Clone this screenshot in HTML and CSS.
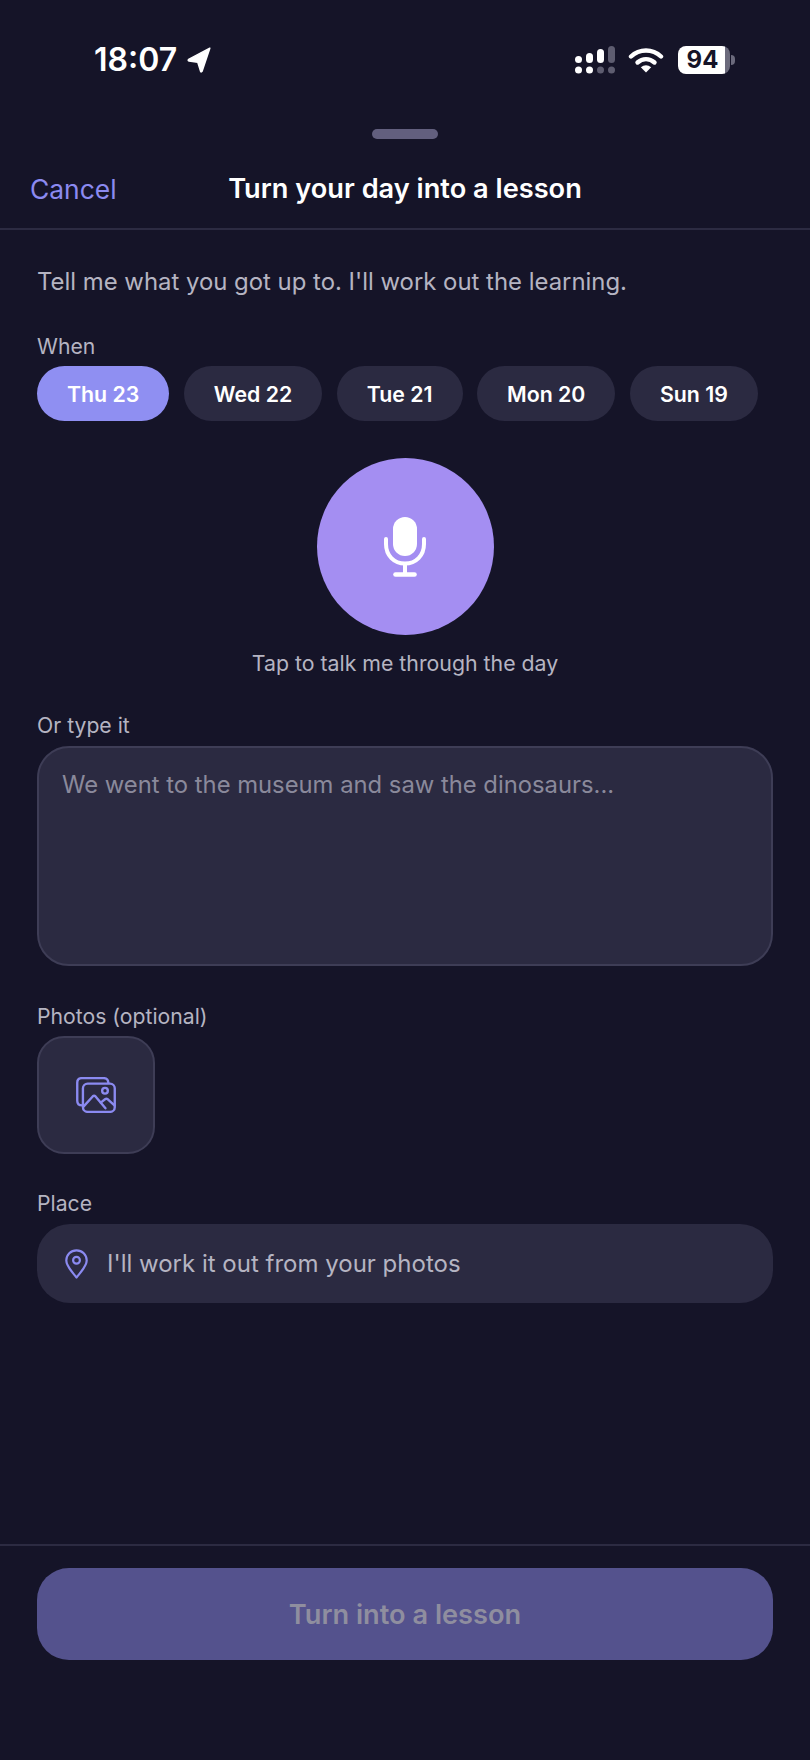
FILE: index.html
```html
<!DOCTYPE html>
<html lang="en">
<head>
    <meta charset="UTF-8">
    <meta name="viewport" content="width=device-width, initial-scale=1.0">
    <title>Turn your day into a lesson</title>
    <link rel="stylesheet" href="styles.css">
</head>
<body>
    <!-- Status bar -->
    <div class="status-bar">
        <div class="status-left">
            <span class="status-time">18:07</span>
            <svg class="status-arrow" width="24" height="26" viewBox="0 0 24 26">
                <path d="M22.8 1.2 L1.6 12.4 Q0.6 13.6 2 14 L10.8 15.2 L13.6 24.4 Q14.2 25.4 15 24.4 Z" fill="#fff" stroke="#fff" stroke-width="1.5" stroke-linejoin="round"/>
            </svg>
        </div>
        <div class="status-right">
            <svg class="status-signal" width="40" height="28" viewBox="0 0 40 28">
                <rect x="0" y="10" width="7" height="7" rx="3.5" fill="#fff"/>
                <rect x="11" y="7" width="7" height="10" rx="3.5" fill="#fff"/>
                <rect x="22" y="3" width="7" height="14" rx="3.5" fill="#fff"/>
                <rect x="33" y="0" width="7" height="17" rx="3.5" fill="#5e5d70"/>
                <circle cx="3.5" cy="24" r="3.5" fill="#fff"/>
                <circle cx="14.5" cy="24" r="3.5" fill="#fff"/>
                <circle cx="25.5" cy="24" r="3.5" fill="#5e5d70"/>
                <circle cx="36.5" cy="24" r="3.5" fill="#5e5d70"/>
            </svg>
            <svg class="status-wifi" width="36" height="26" viewBox="0 0 36 26">
                <path d="M3 9.5 C11.5 1.5 24.5 1.5 33 9.5" fill="none" stroke="#fff" stroke-width="4.4" stroke-linecap="round"/>
                <path d="M9.5 15.5 C14.5 11 21.5 11 26.5 15.5" fill="none" stroke="#fff" stroke-width="4.4" stroke-linecap="round"/>
                <path d="M12.8 20.2 Q18 16.2 23.2 20.2 L18 25.6 Z" fill="#fff"/>
            </svg>
            <div class="battery">
                <div class="battery-body"><span class="battery-level">94</span></div>
                <div class="battery-nub"></div>
            </div>
        </div>
    </div>

    <div class="sheet-handle"></div>

    <!-- Header -->
    <div class="sheet-header">
        <span class="cancel-link">Cancel</span>
        <h1 class="sheet-title">Turn your day into a lesson</h1>
    </div>

    <div class="content">
        <p class="intro">Tell me what you got up to. I'll work out the learning.</p>

        <div class="field-label when-label">When</div>
        <div class="chip-row">
            <span class="chip chip-active">Thu 23</span>
            <span class="chip">Wed 22</span>
            <span class="chip">Tue 21</span>
            <span class="chip">Mon 20</span>
            <span class="chip">Sun 19</span>
        </div>

        <!-- Voice input -->
        <div class="mic-block">
            <div class="mic-button">
                <svg width="42" height="60" viewBox="0 0 42 60">
                    <rect x="9" y="0" width="24" height="39" rx="12" fill="#fff"/>
                    <path d="M2 22 V27 C2 38.5 10 46.5 21 46.5 C32 46.5 40 38.5 40 27 V22" fill="none" stroke="#fff" stroke-width="4" stroke-linecap="round"/>
                    <path d="M21 47 V56" stroke="#fff" stroke-width="4"/>
                    <path d="M11.5 57.5 H30.5" stroke="#fff" stroke-width="4.6" stroke-linecap="round"/>
                </svg>
            </div>
            <div class="mic-hint">Tap to talk me through the day</div>
        </div>

        <div class="field-label type-label">Or type it</div>
        <div class="text-box">We went to the museum and saw the dinosaurs...</div>

        <div class="field-label photos-label">Photos (optional)</div>
        <div class="photo-add">
            <svg width="40" height="36" viewBox="0 0 42 38" fill="none" stroke="#8b8af0" stroke-width="2.5" stroke-linejoin="round" stroke-linecap="round">
                <path d="M6.5 30 C3 30 1.2 28.2 1.2 25 V6 C1.2 3 3 1.2 6 1.2 H29 C32 1.2 33.8 2.6 34 6"/>
                <rect x="7.2" y="7" width="33.6" height="29.8" rx="5"/>
                <circle cx="30.5" cy="14.5" r="3"/>
                <path d="M8 31 L17.5 20.5 Q19 19 20.5 20.5 L31 33"/>
                <path d="M26 27 L30.5 23.5 Q32 22.5 33.5 23.5 L40.5 30"/>
            </svg>
        </div>

        <div class="field-label place-label">Place</div>
        <div class="place-field">
            <svg width="23" height="30" viewBox="0 0 23 30" fill="none" stroke="#8b8af0" stroke-width="2.2" stroke-linejoin="round">
                <path d="M11.5 28.5 C6 21.5 1.3 17 1.3 11.5 C1.3 5.7 5.8 1.3 11.5 1.3 C17.2 1.3 21.7 5.7 21.7 11.5 C21.7 17 17 21.5 11.5 28.5 Z"/>
                <circle cx="11.5" cy="11.3" r="3.4"/>
            </svg>
            <span class="place-text">I'll work it out from your photos</span>
        </div>
    </div>

    <!-- Footer action -->
    <div class="footer">
        <div class="submit-button">Turn into a lesson</div>
    </div>
</body>
</html>
```

FILE: styles.css
```css
html, body {
    margin: 0;
    padding: 0;
}

body {
    width: 810px;
    height: 1760px;
    overflow: hidden;
    display: flex;
    flex-direction: column;
    background-color: #151428;
    font-family: Inter, "Noto Sans", sans-serif;
    color: #fff;
}

/* Status bar */
.status-bar {
    height: 118px;
    flex-shrink: 0;
    display: flex;
    justify-content: space-between;
    align-items: center;
    padding: 1px 75px 0 94px;
    box-sizing: border-box;
}

.status-left {
    display: flex;
    align-items: center;
    gap: 10px;
}

.status-time {
    font-size: 32px;
    font-weight: 600;
    line-height: 38px;
}

.status-right {
    display: flex;
    align-items: center;
}

.status-signal {
    margin-right: 13px;
}

.status-wifi {
    margin-right: 14px;
}

.battery {
    display: flex;
    align-items: center;
    gap: 1px;
}

.battery-body {
    width: 52px;
    height: 28px;
    box-sizing: border-box;
    border-radius: 8px;
    background: linear-gradient(to right, #fff 90%, #6b6a7c 90%);
    display: flex;
    align-items: center;
    justify-content: center;
    padding-right: 3px;
}

.battery-level {
    color: #151428;
    font-size: 24px;
    font-weight: 700;
    line-height: 28px;
}

.battery-nub {
    width: 4px;
    height: 10px;
    border-radius: 0 4px 4px 0;
    background-color: #6b6a7c;
}

/* Sheet header */
.sheet-handle {
    width: 66px;
    height: 10px;
    flex-shrink: 0;
    margin: 11px auto 0;
    border-radius: 5px;
    background-color: #625f7e;
}

.sheet-header {
    height: 79px;
    flex-shrink: 0;
    display: grid;
    grid-template-columns: 1fr auto 1fr;
    align-items: center;
    padding: 10px 30px 0;
    border-bottom: 2px solid #2c2b42;
}

.cancel-link {
    font-size: 26.4px;
    line-height: 40px;
    color: #8b8af0;
}

.sheet-title {
    margin: 0;
    font-size: 27.2px;
    font-weight: 600;
    line-height: 40px;
}

/* Form */
.content {
    padding: 0 37px;
    flex: 1;
}

.intro {
    margin: 33px 0 0;
    font-size: 23.9px;
    line-height: 38px;
    color: #b5b4c2;
}

.field-label {
    font-size: 21.2px;
    line-height: 26px;
    color: #b5b4c2;
}

.when-label {
    margin-top: 32px;
}

.chip-row {
    display: flex;
    gap: 14.5px;
    margin-top: 7px;
}

.chip {
    height: 55px;
    padding: 0 30px;
    display: flex;
    align-items: center;
    border-radius: 28px;
    background-color: #2b2a41;
    font-size: 21.3px;
    font-weight: 600;
}

.chip-active {
    background-color: #8f8ff2;
}

.mic-block {
    margin-top: 37px;
    display: flex;
    flex-direction: column;
    align-items: center;
}

.mic-button {
    width: 177px;
    height: 177px;
    border-radius: 50%;
    background-color: #a48ef2;
    display: flex;
    align-items: center;
    justify-content: center;
}

.mic-hint {
    margin-top: 15px;
    font-size: 21.3px;
    line-height: 26px;
    color: #b5b4c2;
}

.type-label {
    margin-top: 36px;
}

.text-box {
    height: 220px;
    margin-top: 8px;
    padding: 21px 23px;
    box-sizing: border-box;
    border: 2px solid #3e3d56;
    border-radius: 32px;
    background-color: #2b2a41;
    font-size: 23.8px;
    line-height: 32px;
    color: #8a899b;
}

.photos-label {
    margin-top: 37px;
}

.photo-add {
    width: 118px;
    height: 118px;
    margin-top: 7px;
    box-sizing: border-box;
    border: 2px solid #3e3d56;
    border-radius: 27px;
    background-color: #2b2a41;
    display: flex;
    align-items: center;
    justify-content: center;
}

.place-label {
    margin-top: 36px;
}

.place-field {
    height: 79px;
    margin-top: 8px;
    padding: 0 28px;
    display: flex;
    align-items: center;
    gap: 19px;
    border-radius: 33px;
    background-color: #2b2a41;
}

.place-text {
    font-size: 24px;
    color: #b5b4c2;
}

/* Footer */
.footer {
    height: 216px;
    flex-shrink: 0;
    box-sizing: border-box;
    padding: 22px 37px 0;
    border-top: 2px solid #2c2b42;
}

.submit-button {
    height: 92px;
    display: flex;
    align-items: center;
    justify-content: center;
    border-radius: 32px;
    background-color: #54528d;
    font-size: 27.2px;
    font-weight: 600;
    color: #8f8e9f;
}
```
